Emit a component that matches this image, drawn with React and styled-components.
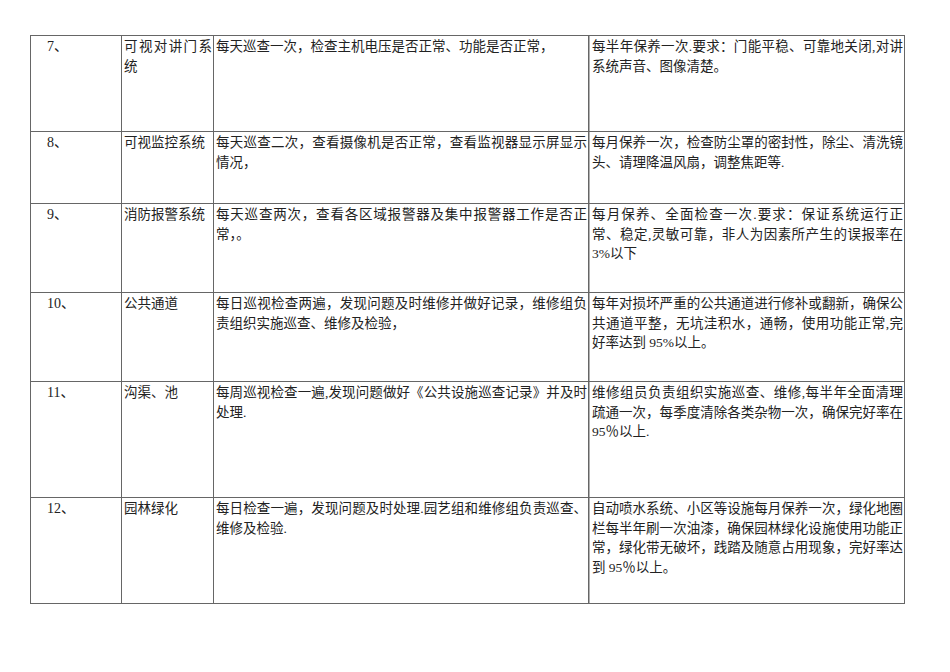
import React from "react";
import styled, { createGlobalStyle } from "styled-components";

const rows = [
  {
    no: "7、",
    name: "可视对讲门系统",
    check: "每天巡查一次，检查主机电压是否正常、功能是否正常，",
    keep: "每半年保养一次.要求：门能平稳、可靠地关闭,对讲系统声音、图像清楚。",
    h: 96,
  },
  {
    no: "8、",
    name: "可视监控系统",
    check: "每天巡查二次，查看摄像机是否正常，查看监视器显示屏显示情况，",
    keep: "每月保养一次，检查防尘罩的密封性，除尘、清洗镜头、请理降温风扇，调整焦距等.",
    h: 72,
  },
  {
    no: "9、",
    name: "消防报警系统",
    check: "每天巡查两次，查看各区域报警器及集中报警器工作是否正常，。",
    keep: "每月保养、全面检查一次.要求：保证系统运行正常、稳定,灵敏可靠，非人为因素所产生的误报率在3%以下",
    h: 89,
  },
  {
    no: "10、",
    name: "公共通道",
    check: "每日巡视检查两遍，发现问题及时维修并做好记录，维修组负责组织实施巡查、维修及检验，",
    keep: "每年对损坏严重的公共通道进行修补或翻新，确保公共通道平整，无坑洼积水，通畅，使用功能正常,完好率达到 95%以上。",
    h: 89,
  },
  {
    no: "11、",
    name: "沟渠、池",
    check: "每周巡视检查一遍,发现问题做好《公共设施巡查记录》并及时处理.",
    keep: "维修组员负责组织实施巡查、维修,每半年全面清理疏通一次，每季度清除各类杂物一次，确保完好率在95％以上.",
    h: 116,
  },
  {
    no: "12、",
    name: "园林绿化",
    check: "每日检查一遍，发现问题及时处理.园艺组和维修组负责巡查、维修及检验.",
    keep: "自动喷水系统、小区等设施每月保养一次，绿化地圈栏每半年刷一次油漆，确保园林绿化设施使用功能正常，绿化带无破坏，践踏及随意占用现象，完好率达到 95％以上。",
    h: 106,
  },
];

function App() {
  return (
    <>
      <GlobalStyle />
      <Page>
        <Table>
          {rows.map((r) => (
            <Row key={r.no} $h={r.h}>
              <NoCell>{r.no}</NoCell>
              <Cell>{r.name}</Cell>
              <Cell>{r.check}</Cell>
              <Cell $soft>{r.keep}</Cell>
            </Row>
          ))}
        </Table>
      </Page>
    </>
  );
}

export default App;

// Styled Components

const GlobalStyle = createGlobalStyle`
  html, body {
    margin: 0;
    padding: 0;
    background: #ffffff;
  }
  body {
    font-family: "Liberation Serif", "Noto Sans CJK SC", serif;
    color: #222;
  }
`;

const Page = styled.div`
  width: 950px;
  height: 672px;
  padding: 35px 0 0 30px;
  box-sizing: border-box;
  background: #fff;
`;

const Table = styled.div`
  width: 875px;
  display: flex;
  flex-direction: column;
  border-top: 1px solid #666;
  border-left: 1px solid #666;
  box-sizing: border-box;
`;

const Row = styled.div`
  display: grid;
  grid-template-columns: 91px 92px 375px 316px;
  height: ${(p) => p.$h}px;
  border-bottom: 1px solid #666;
  box-sizing: border-box;
`;

const Cell = styled.div`
  padding: 1px 1px 0 2px;
  border-right: 1px solid #666;
  border-left: ${(p) => (p.$soft ? "1px solid #b0b0b0" : "none")};
  font-size: 13.5px;
  line-height: 19.5px;
  text-align: justify;
  text-justify: inter-character;
  word-break: break-all;
  color: #222;
  overflow: hidden;
`;

const NoCell = styled(Cell)`
  padding-left: 16px;
  font-size: 14px;
`;
